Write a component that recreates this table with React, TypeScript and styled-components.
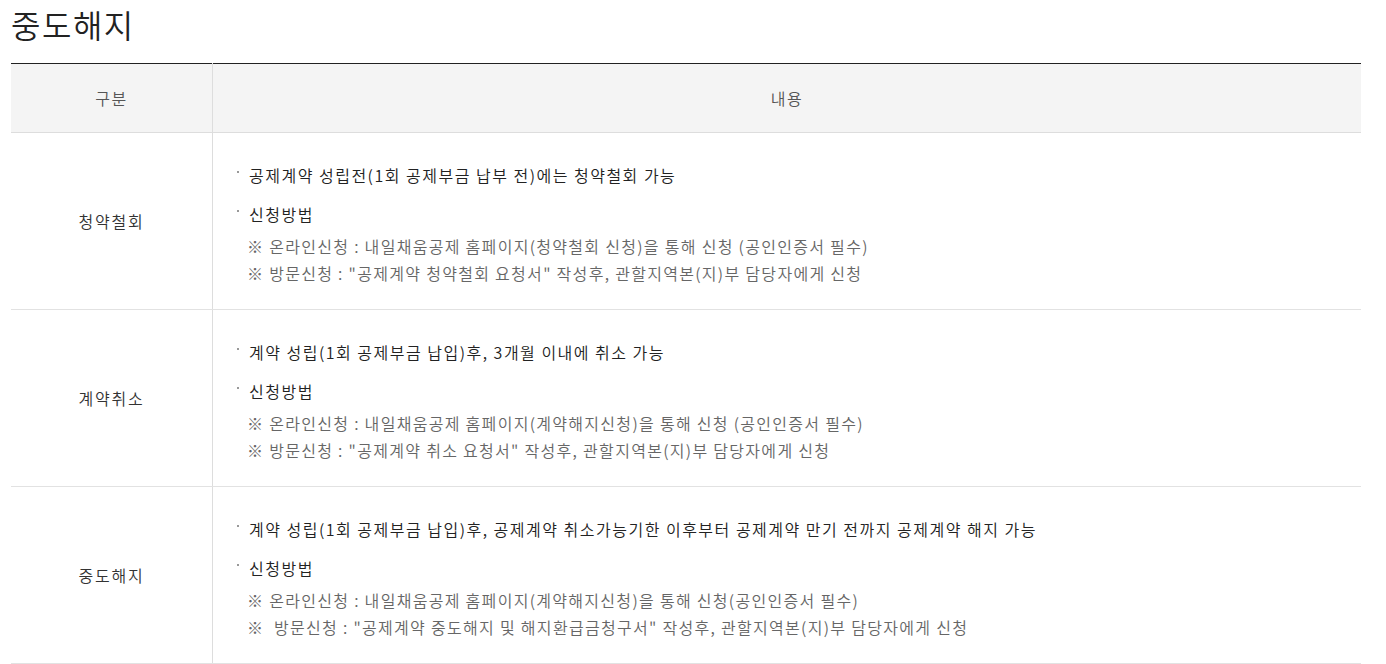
import React from "react";
import styled, { createGlobalStyle } from "styled-components";

const Global = createGlobalStyle`
  html, body { margin: 0; padding: 0; background: #fff; }
  body { font-family: "Noto Sans CJK KR", "Noto Sans", sans-serif; color: #333; }
`;

const Page = styled.div`
  width: 1350px;
  margin-left: 11px;
`;

const Title = styled.h2`
  margin: 0;
  padding-top: 1px;
  height: 62px;
  font-size: 32px;
  font-weight: 350;
  line-height: 46px;
  color: #222;
  letter-spacing: 1.5px;
`;

const Table = styled.table`
  width: 100%;
  border-collapse: collapse;
  border-top: 1px solid #222;
  table-layout: fixed;
`;

const Th = styled.th<{ $w?: number }>`
  width: ${(p) => (p.$w ? `${p.$w}px` : "auto")};
  height: 68px;
  padding: 0;
  background: #f4f4f4;
  border-bottom: 1px solid #ddd;
  border-left: 1px solid #ddd;
  &:first-child { border-left: none; }
  font-size: 16px;
  font-weight: 350;
  color: #555;
  letter-spacing: 1.5px;
  text-align: center;
  vertical-align: middle;
`;

const Label = styled.td`
  text-align: center;
  vertical-align: middle;
  font-size: 16px;
  font-weight: 350;
  letter-spacing: 1.8px;
  color: #333;
  border-bottom: 1px solid #e2e2e2;
  padding: 0;
`;

const Content = styled.td`
  border-left: 1px solid #ddd;
  border-bottom: 1px solid #e2e2e2;
  padding: 29px 24px 22px 24px;
  vertical-align: top;
`;

const List = styled.ul`
  margin: 0;
  padding: 0;
  list-style: none;
`;

const Item = styled.li`
  position: relative;
  padding-left: 12px;
  font-size: 16px;
  font-weight: 350;
  line-height: 27px;
  color: #222;
  letter-spacing: 1.5px;
  & + & { margin-top: 12px; }
  &::before {
    content: "";
    position: absolute;
    left: 0;
    top: 9px;
    width: 2px;
    height: 2px;
    background: #999;
  }
`;

const Notes = styled.div`
  margin-top: 5px;
  margin-left: -2px;
`;

const Note = styled.p`
  margin: 0;
  font-size: 16px;
  font-weight: 350;
  line-height: 27px;
  color: #666;
  letter-spacing: 1.3px;
  white-space: pre;
`;

type Row = { label: string; first: string; notes: string[] };

const rows: Row[] = [
  {
    label: "청약철회",
    first: "공제계약 성립전(1회 공제부금 납부 전)에는 청약철회 가능",
    notes: [
      "※ 온라인신청 : 내일채움공제 홈페이지(청약철회 신청)을 통해 신청 (공인인증서 필수)",
      "※ 방문신청 : \"공제계약 청약철회 요청서\" 작성후, 관할지역본(지)부 담당자에게 신청",
    ],
  },
  {
    label: "계약취소",
    first: "계약 성립(1회 공제부금 납입)후, 3개월 이내에 취소 가능",
    notes: [
      "※ 온라인신청 : 내일채움공제 홈페이지(계약해지신청)을 통해 신청 (공인인증서 필수)",
      "※ 방문신청 : \"공제계약 취소 요청서\" 작성후, 관할지역본(지)부 담당자에게 신청",
    ],
  },
  {
    label: "중도해지",
    first: "계약 성립(1회 공제부금 납입)후, 공제계약 취소가능기한 이후부터 공제계약 만기 전까지 공제계약 해지 가능",
    notes: [
      "※ 온라인신청 : 내일채움공제 홈페이지(계약해지신청)을 통해 신청(공인인증서 필수)",
      "※  방문신청 : \"공제계약 중도해지 및 해지환급금청구서\" 작성후, 관할지역본(지)부 담당자에게 신청",
    ],
  },
];

export default function App() {
  return (
    <Page>
      <Global />
      <Title>중도해지</Title>
      <Table>
        <thead>
          <tr>
            <Th $w={201}>구분</Th>
            <Th>내용</Th>
          </tr>
        </thead>
        <tbody>
          {rows.map((r) => (
            <tr key={r.label}>
              <Label>{r.label}</Label>
              <Content>
                <List>
                  <Item>{r.first}</Item>
                  <Item>
                    신청방법
                    <Notes>
                      {r.notes.map((n) => (
                        <Note key={n}>{n}</Note>
                      ))}
                    </Notes>
                  </Item>
                </List>
              </Content>
            </tr>
          ))}
        </tbody>
      </Table>
    </Page>
  );
}
